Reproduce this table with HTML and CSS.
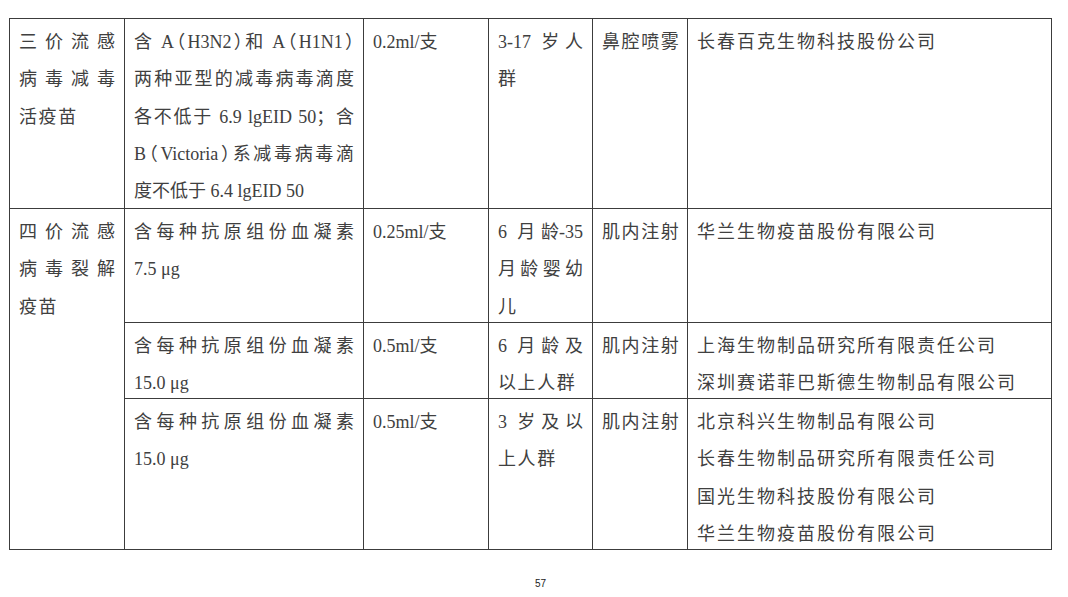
FILE: index.html
```html
<!DOCTYPE html>
<html lang="zh-CN">
<head>
<meta charset="utf-8">
<title>流感疫苗</title>
<link rel="stylesheet" href="styles.css">
</head>
<body>
<div class="page">
  <table class="vac">
    <colgroup>
      <col class="c1"><col class="c2"><col class="c3"><col class="c4"><col class="c5"><col class="c6">
    </colgroup>
    <tr class="r1">
      <td><span class="j">三价流感</span><span class="j">病毒减毒</span><span class="l sp">活疫苗</span></td>
      <td><span class="j">含 A<span class="p">（</span>H3N2<span class="p">）</span>和 A<span class="p">（</span>H1N1<span class="p">）</span></span><span class="j">两种亚型的减毒病毒滴度</span><span class="j">各不低于 6.9 lgEID 50；含</span><span class="j">B<span class="p">（</span>Victoria<span class="p">）</span>系减毒病毒滴</span><span class="l">度不低于 6.4 lgEID 50</span></td>
      <td>0.2ml/支</td>
      <td><span class="j">3-17 岁人</span><span class="l">群</span></td>
      <td class="sp">鼻腔喷雾</td>
      <td class="sp co"><span class="l">长春百克生物科技股份公司</span></td>
    </tr>
    <tr class="r2">
      <td rowspan="3"><span class="j">四价流感</span><span class="j">病毒裂解</span><span class="l sp">疫苗</span></td>
      <td><span class="j">含每种抗原组份血凝素</span><span class="l">7.5 μg</span></td>
      <td>0.25ml/支</td>
      <td><span class="j">6 月<span class="nb">龄-35</span></span><span class="j">月龄婴幼</span><span class="l">儿</span></td>
      <td class="sp">肌内注射</td>
      <td class="sp co"><span class="l">华兰生物疫苗股份有限公司</span></td>
    </tr>
    <tr class="r3">
      <td><span class="j">含每种抗原组份血凝素</span><span class="l">15.0 μg</span></td>
      <td>0.5ml/支</td>
      <td><span class="j">6 月龄及</span><span class="l sp">以上人群</span></td>
      <td class="sp">肌内注射</td>
      <td class="sp co"><span class="l">上海生物制品研究所有限责任公司</span><span class="l">深圳赛诺菲巴斯德生物制品有限公司</span></td>
    </tr>
    <tr class="r4">
      <td><span class="j">含每种抗原组份血凝素</span><span class="l">15.0 μg</span></td>
      <td>0.5ml/支</td>
      <td><span class="j">3 岁及以</span><span class="l sp">上人群</span></td>
      <td class="sp">肌内注射</td>
      <td class="sp co"><span class="l">北京科兴生物制品有限公司</span><span class="l">长春生物制品研究所有限责任公司</span><span class="l">国光生物科技股份有限公司</span><span class="l">华兰生物疫苗股份有限公司</span></td>
    </tr>
  </table>
  <div class="pageno">57</div>
</div>
</body>
</html>
```

FILE: styles.css
```css
html, body {
  margin: 0;
  padding: 0;
  background: #ffffff;
}

.page {
  width: 1068px;
  height: 597px;
  padding: 18px 0 0 9px;
  box-sizing: border-box;
  font-family: "Liberation Serif", "Noto Sans CJK SC", serif;
  font-size: 18px;
  color: #404040;
}

.vac {
  border-collapse: collapse;
  table-layout: fixed;
  width: 1042px;
}

.vac col.c1 { width: 115px; }
.vac col.c2 { width: 239px; }
.vac col.c3 { width: 125px; }
.vac col.c4 { width: 104px; }
.vac col.c5 { width: 95px; }
.vac col.c6 { width: 364px; }

.vac td {
  border: 1px solid #3c3c3c;
  vertical-align: top;
  padding: 5px 9px 0 9px;
  line-height: 37.3px;
  white-space: nowrap;
}

.vac td > :last-child {
  margin-bottom: -10px;
}

.vac .j {
  display: block;
  text-align: justify;
  text-align-last: justify;
  white-space: nowrap;
}

.vac .l {
  display: block;
  text-align: left;
  white-space: nowrap;
}

.vac .nb {
  display: inline-block;
}

.vac .p {
  font-feature-settings: "halt" 1;
}

.vac .sp {
  letter-spacing: 1.6px;
}

.vac .co {
  letter-spacing: 2px;
}

.vac tr.r1 { height: 190px; }
.vac tr.r2 { height: 114px; }
.vac tr.r3 { height: 76px; }
.vac tr.r4 { height: 151px; }

.pageno {
  margin-top: 28px;
  width: 1063px;
  text-align: center;
  font-family: "Liberation Sans", sans-serif;
  font-size: 10px;
  color: #222;
}
```
